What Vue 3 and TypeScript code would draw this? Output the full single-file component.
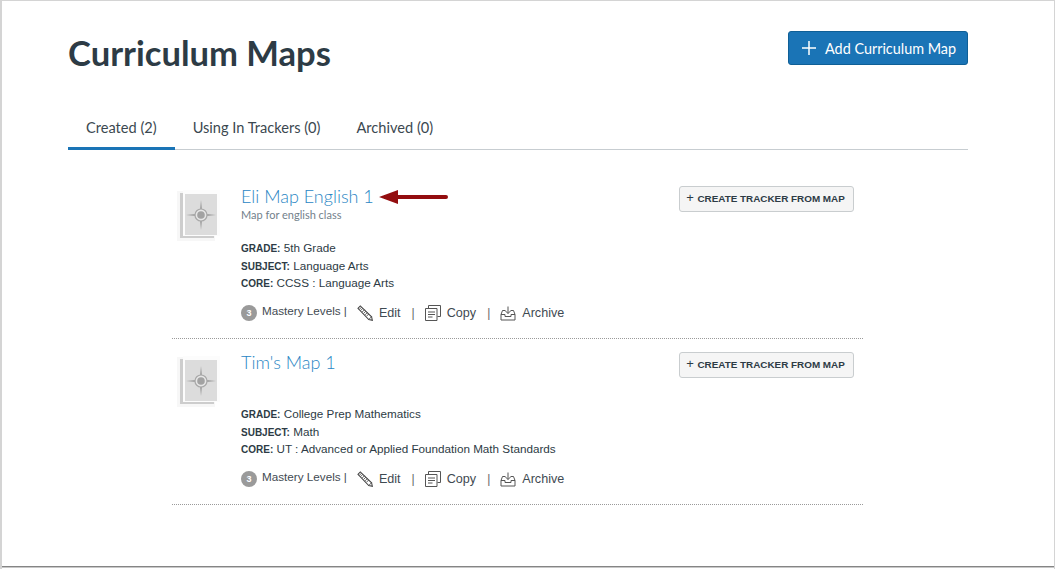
<script setup lang="ts">
interface CurriculumMap {
  title: string;
  description: string;
  grade: string;
  subject: string;
  core: string;
  marked: boolean;
}

const tabs = ["Created (2)", "Using In Trackers (0)", "Archived (0)"];

const maps: CurriculumMap[] = [
  {
    title: "Eli Map English 1",
    description: "Map for english class",
    grade: "5th Grade",
    subject: "Language Arts",
    core: "CCSS : Language Arts",
    marked: true
  },
  {
    title: "Tim's Map 1",
    description: "",
    grade: "College Prep Mathematics",
    subject: "Math",
    core: "UT : Advanced or Applied Foundation Math Standards",
    marked: false
  }
];
</script>

<template>
  <div class="frame">
    <header class="head">
      <h1>Curriculum Maps</h1>
      <button class="add">
        <svg width="14" height="14" viewBox="0 0 14 14"><path d="M7 0v14M0 7h14" stroke="#fff" stroke-width="1.500" fill="none" /></svg>
        Add Curriculum Map
      </button>
    </header>

    <nav class="tabs">
      <a v-for="(tab, i) in tabs" :key="tab" class="tab" :class="{ active: i === 0 }">{{ tab }}</a>
    </nav>

    <section class="list">
      <article v-for="map in maps" :key="map.title" class="row">
        <svg class="thumb" width="46" height="54" viewBox="0 0 46 54">
          <rect x="0" y="3" width="38" height="50" fill="#f7f7f7" />
          <rect x="3" y="5" width="34" height="45" fill="#cdcdcd" />
          <rect x="6" y="2" width="37" height="46" fill="#fcfcfc" />
          <rect x="8" y="6" width="32" height="41" fill="#dcdcdc" />
          <path d="M24 12l1.500 12-1.500 3-1.500-3zM24 42l1.500-12-1.500-3-1.500 3zM9 27l12-1.500 3 1.500-3 1.500zM39 27l-12-1.500-3 1.500 3 1.500z" fill="#a8a8a8" />
          <circle cx="24" cy="27" r="6" fill="#e6e6e6" stroke="#a8a8a8" stroke-width="1.200" />
          <circle cx="24" cy="27" r="3.800" fill="#a2a2a2" />
        </svg>

        <div class="body">
          <div class="title-line">
            <a class="title">{{ map.title }}</a>
            <svg v-if="map.marked" class="arrow" width="69" height="16" viewBox="0 0 69 16">
              <path d="M0 8L19 1v5h48a2 2 0 0 1 0 4H19v5z" fill="#930d0f" />
            </svg>
          </div>
          <p class="desc">{{ map.description }}</p>

          <dl class="meta">
            <div><dt>GRADE:</dt> <dd>{{ map.grade }}</dd></div>
            <div><dt>SUBJECT:</dt> <dd>{{ map.subject }}</dd></div>
            <div><dt>CORE:</dt> <dd>{{ map.core }}</dd></div>
          </dl>

          <div class="actions">
            <span class="badge">3</span>
            <span class="levels">Mastery Levels |</span>
            <a class="action edit">
              <svg width="16" height="16" viewBox="0 0 17 17" fill="none" stroke="#444" stroke-width="1.100">
                <path d="M1 3.500L3.500 1l12 11.500 0.800 3.800-3.800-0.900z" />
                <path d="M2.300 4.800L4.800 2.300M3.800 6l2.500-2.500M5.500 7.500L8 5M7 9l2.500-2.500M8.500 10.500L11 8M10 12l2.500-2.500M12.500 15.400l2.900-2.900" stroke-width="0.900" />
              </svg>
              Edit
            </a>
            <span class="sep">|</span>
            <a class="action copy">
              <svg width="16" height="16" viewBox="0 0 16 16" fill="none" stroke="#555" stroke-width="1">
                <path d="M3.500 3V0.500h12v11H12.500" />
                <path d="M0.500 3.500h11.500v12H0.500z" />
                <path d="M3 7h7M3 9.500h7M3 12h4.500" />
              </svg>
              Copy
            </a>
            <span class="sep">|</span>
            <a class="action archive">
              <svg width="16" height="16" viewBox="0 0 16 16" fill="none" stroke="#555" stroke-width="1">
                <path d="M5.500 5.500H2.500L1 9.500v5.500h14V9.500L13.500 5.500H10.500" />
                <path d="M1 9.500h4v2h6v-2h4" />
                <path d="M8 1.500v7M5.500 6L8 8.500 10.500 6" />
              </svg>
              Archive
            </a>
          </div>
        </div>

        <button class="tracker"><i>+</i> <span>CREATE TRACKER FROM MAP</span></button>
      </article>
    </section>
  </div>
</template>

<style scoped>
.frame {
  box-sizing: border-box;
  width: 1055px;
  height: 569px;
  padding: 0 86px 0 66px;
  background: #fff;
  border: solid #d4d4d4;
  border-width: 1px 1px 0 2px;
  box-shadow: inset 0 -1px 0 #fff, inset 0 -2px 0 #c8c8c8, inset 0 -3px 0 #858585;
  font-family: "Liberation Sans", Arial, sans-serif;
  color: #2d3b45;
}
.head {
  display: flex;
  justify-content: space-between;
  align-items: flex-start;
  padding-top: 30px;
}
h1 {
  margin: 0;
  font: 700 34.600px/44px Lato, sans-serif;
  color: #2d3b45;
}
.add {
  display: flex;
  align-items: center;
  gap: 9px;
  box-sizing: border-box;
  width: 180px;
  height: 34px;
  padding: 0 0 0 13px;
  background: #1a74b6;
  border: 1px solid #0f5f96;
  border-radius: 3px;
  color: #fff;
  font: 400 14.400px Lato, sans-serif;
}
.tabs {
  display: flex;
  margin-top: 38px;
  border-bottom: 1px solid #c7cdd1;
}
.tab {
  height: 37px;
  box-sizing: border-box;
  margin-bottom: -1px;
  padding: 5px 18px 0;
  font: 400 14.600px/20px Lato, sans-serif;
  color: #3b4850;
}
.tab.active {
  border-bottom: 3px solid #1a74b6;
}
.list {
  width: 691px;
  margin-left: 104px;
}
.row {
  display: flex;
  box-sizing: border-box;
  height: 166px;
  padding: 36px 0 0 5px;
  border-bottom: 1px dotted #9a9a9a;
}
.row:first-child {
  height: 189px;
}
.row + .row {
  padding-top: 13px;
}
.thumb {
  flex: none;
  margin-top: 2px;
  filter: blur(0.4px);
}
.body {
  flex: 1;
  margin-left: 18px;
}
.title-line {
  display: flex;
  align-items: center;
  height: 21px;
}
.title {
  font: 300 18px/21px Lato, sans-serif;
  color: #2a86c4;
}
.arrow {
  margin-left: 5px;
}
.desc {
  height: 14px;
  margin: 1px 0 0;
  font: 400 11px/14px Lato, sans-serif;
  color: #73818b;
}
.meta {
  margin: 17px 0 0;
  font-size: 11.700px;
}
.meta div {
  height: 17.500px;
  line-height: 17.500px;
}
.meta dt,
.meta dd {
  display: inline;
  margin: 0;
}
.meta dt {
  font-size: 10px;
  font-weight: 700;
}
.actions {
  display: flex;
  align-items: center;
  margin-top: 13px;
  font-size: 12.600px;
  color: #3f4a52;
}
.badge {
  display: flex;
  align-items: center;
  justify-content: center;
  width: 16px;
  height: 16px;
  border-radius: 50%;
  background: #9a9a9a;
  color: #fff;
  font-size: 9px;
  font-weight: 700;
}
.levels {
  margin: -4px 0 0 5px;
  font-size: 11.700px;
}
.action {
  display: flex;
  align-items: center;
  gap: 6px;
}
.edit {
  margin-left: 10px;
}
.sep {
  margin: 0 10px 0 11px;
  font-size: 12px;
  color: #666;
}
button.tracker {
  align-self: flex-start;
  flex: none;
  box-sizing: border-box;
  width: 175px;
  height: 26px;
  margin-right: 9px;
  padding: 0 2px 3px 0;
  background: #f5f5f5;
  border: 1px solid #c9cdcf;
  border-radius: 3px;
  color: #2d3b45;
  font: 400 13px "Liberation Sans", Arial, sans-serif;
}
.tracker i {
  font-style: normal;
}
.tracker span {
  font-size: 9.900px;
  font-weight: 700;
}
</style>

<style>
html, body {
  margin: 0;
  background: #fff;
}
</style>
